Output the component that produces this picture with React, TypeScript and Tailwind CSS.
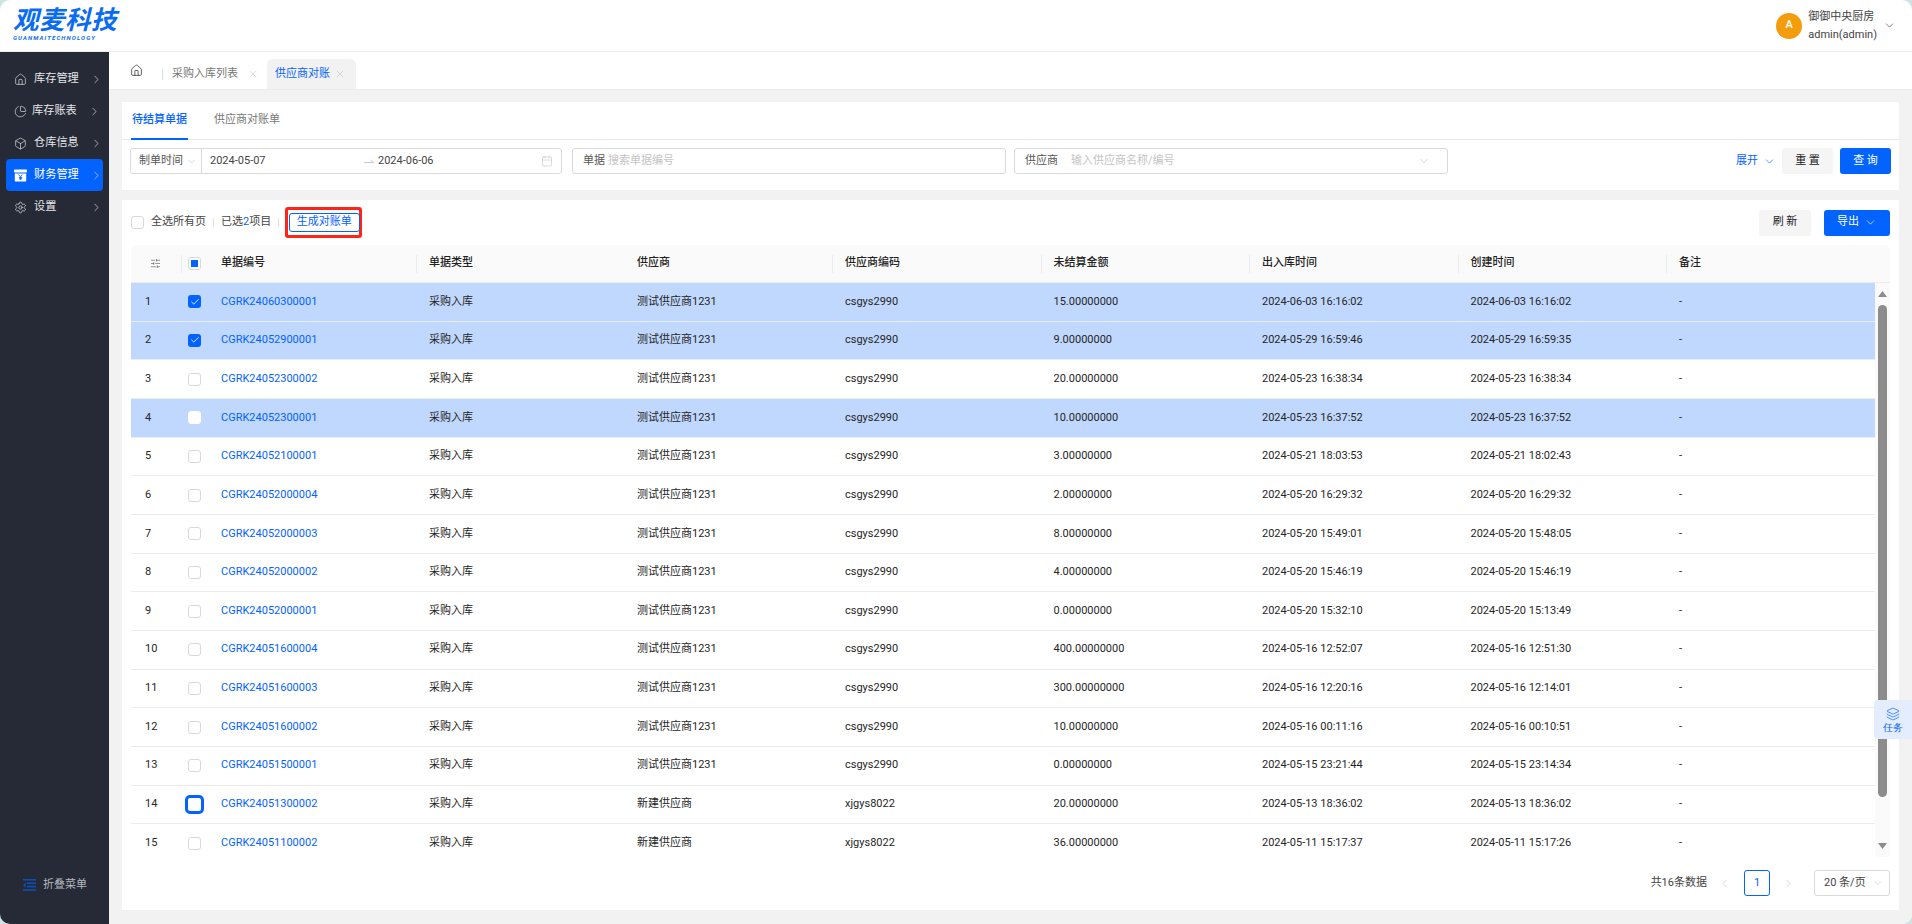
import { Home, PieChart, Box, Settings, X, ChevronRight, ChevronDown, ChevronLeft, Calendar, Layers, SlidersHorizontal, Check, House } from "lucide-react";

const F = { fontFamily: 'Roboto, "Noto Sans CJK SC", sans-serif' };
const S = "测试供应商1231";
const N = "新建供应商";
const A = "csgys2990";
const B = "xjgys8022";
const rows: [string, string, string, string, string, string][] = [
  ["CGRK24060300001", S, A, "15.00000000", "2024-06-03 16:16:02", "2024-06-03 16:16:02"],
  ["CGRK24052900001", S, A, "9.00000000", "2024-05-29 16:59:46", "2024-05-29 16:59:35"],
  ["CGRK24052300002", S, A, "20.00000000", "2024-05-23 16:38:34", "2024-05-23 16:38:34"],
  ["CGRK24052300001", S, A, "10.00000000", "2024-05-23 16:37:52", "2024-05-23 16:37:52"],
  ["CGRK24052100001", S, A, "3.00000000", "2024-05-21 18:03:53", "2024-05-21 18:02:43"],
  ["CGRK24052000004", S, A, "2.00000000", "2024-05-20 16:29:32", "2024-05-20 16:29:32"],
  ["CGRK24052000003", S, A, "8.00000000", "2024-05-20 15:49:01", "2024-05-20 15:48:05"],
  ["CGRK24052000002", S, A, "4.00000000", "2024-05-20 15:46:19", "2024-05-20 15:46:19"],
  ["CGRK24052000001", S, A, "0.00000000", "2024-05-20 15:32:10", "2024-05-20 15:13:49"],
  ["CGRK24051600004", S, A, "400.00000000", "2024-05-16 12:52:07", "2024-05-16 12:51:30"],
  ["CGRK24051600003", S, A, "300.00000000", "2024-05-16 12:20:16", "2024-05-16 12:14:01"],
  ["CGRK24051600002", S, A, "10.00000000", "2024-05-16 00:11:16", "2024-05-16 00:10:51"],
  ["CGRK24051500001", S, A, "0.00000000", "2024-05-15 23:21:44", "2024-05-15 23:14:34"],
  ["CGRK24051300002", N, B, "20.00000000", "2024-05-13 18:36:02", "2024-05-13 18:36:02"],
  ["CGRK24051100002", N, B, "36.00000000", "2024-05-11 15:17:37", "2024-05-11 15:17:26"],
];

function FinanceIcon() {
  return (
    <svg width="13" height="13" viewBox="0 0 13 13">
      <rect x="0" y="0.5" width="13" height="3" rx="0.8" fill="#fff" />
      <path d="M0.8 4.4h11.4v7a1.2 1.2 0 0 1-1.2 1.2H2a1.2 1.2 0 0 1-1.2-1.2z" fill="#fff" />
      <path d="M4.6 5.6l1.9 2.2 1.9-2.2M6.5 7.8v3M4.9 8.6h3.2M4.9 9.8h3.2" stroke="#0363ff" strokeWidth="0.9" fill="none" />
    </svg>
  );
}

function NavItem({ icon, label, active, shift }: { icon: React.ReactNode; label: string; active?: boolean; shift?: boolean }) {
  return (
    <div className={`h-8 mx-[6px] rounded-[4px] flex items-center pl-[8px] ${active ? "bg-[#0363ff] text-white" : "text-[#e4e6ea]"}`}>
      <span className="w-[13px] flex justify-center mr-[7px]">{icon}</span>
      <span className={`text-[11.2px] w-[45px] whitespace-nowrap ${shift ? "-ml-[2px]" : ""}`}>{label}</span>
      <ChevronRight size={13} strokeWidth={1.3} className="ml-[11px] text-[#d6d8dc]" />
    </div>
  );
}

function Th({ w, label, sep = true }: { w: string; label: string; sep?: boolean }) {
  return (
    <div className={`${w} h-full relative flex items-center pl-[13px] text-[11px] font-medium text-[#222]`}>
      {sep && <span className="absolute left-0 top-[10px] h-[18px] w-px bg-[#ececec]" />}
      {label}
    </div>
  );
}

function Box13({ checked, focus, white }: { checked?: boolean; focus?: boolean; white?: boolean }) {
  if (focus) return <span className="w-[19px] h-[19px] rounded-[5px] border-[3px] border-[#0363ff] bg-white" />;
  if (checked)
    return (
      <span className="w-[13px] h-[13px] rounded-[3px] bg-[#0363ff] flex items-center justify-center">
        <Check size={10} strokeWidth={2} className="text-white" />
      </span>
    );
  return <span className={`w-[13px] h-[13px] rounded-[3px] border bg-white ${white ? "border-white" : "border-[#d9d9d9]"}`} />;
}

export default function App() {
  return (
    <div className="w-[1912px] h-[924px] bg-[#cfe3e3]">
      <div style={F} className="w-full h-full rounded-[10px] overflow-hidden flex flex-col bg-white text-[#262626]">
        {/* header */}
        <header className="h-[52px] shrink-0 border-b border-[#ececec] flex items-center justify-between pl-[13px] pr-[16px]">
          <div className="flex flex-col leading-none italic text-[#0a6cf0]">
            <span className="text-[25.5px] font-bold leading-[25px] tracking-[0.5px] -mt-[2px]">观麦科技</span>
            <span className="text-[6px] font-bold tracking-[1.12px] mt-[2px] whitespace-nowrap">GUANMAITECHNOLOGY</span>
          </div>
          <div className="flex items-center">
            <span className="w-[26px] h-[26px] rounded-full bg-[#f49d0c] text-white text-[11px] font-medium flex items-center justify-center">A</span>
            <div className="ml-[6px] text-[11px] text-[#444] leading-[18px]">
              <div>御御中央厨房</div>
              <div>admin(admin)</div>
            </div>
            <ChevronDown size={13} strokeWidth={1.3} className="ml-[6px] text-[#555]" />
          </div>
        </header>

        <div className="flex-1 flex min-h-0">
          {/* sidebar */}
          <aside className="w-[109px] shrink-0 bg-[#252a36] flex flex-col pt-[11px] pb-[31px]">
            <div className="flex flex-col">
              <NavItem label="库存管理" icon={<House size={13} strokeWidth={1.2} />} />
              <NavItem label="库存账表" shift icon={<PieChart size={13} strokeWidth={1.2} />} />
              <NavItem label="仓库信息" icon={<Box size={13} strokeWidth={1.2} />} />
              <NavItem label="财务管理" active icon={<FinanceIcon />} />
              <NavItem label="设置" icon={<Settings size={13} strokeWidth={1.3} />} />
            </div>
            <div className="mt-auto flex items-center pl-[23px] text-[11px] text-[#b4b7bd]">
              <svg width="13" height="12" viewBox="0 0 13 12" className="mr-[7px]" fill="#0d4fb8">
                <rect x="0" y="0" width="13" height="1.6" />
                <rect x="4" y="3.4" width="9" height="1.6" />
                <rect x="4" y="6.8" width="9" height="1.6" />
                <rect x="0" y="10.2" width="13" height="1.6" />
                <path d="M2.6 3.4v5L0 5.9z" />
              </svg>
              折叠菜单
            </div>
          </aside>

          {/* main */}
          <main className="flex-1 min-w-0 flex flex-col bg-[#f2f2f2]">
            <nav className="h-[38px] shrink-0 bg-white border-b border-[#ececec] flex items-end text-[11px]">
              <div className="w-[54px] h-full flex items-center pl-[21px] relative">
                <Home size={13} strokeWidth={1.4} className="text-[#333]" />
                <span className="absolute right-0 top-[17px] w-px h-[11px] bg-[#ddd]" />
              </div>
              <div className="w-[104px] h-[30px] flex items-center pl-[9px] text-[#777]">
                <span className="w-[70px] whitespace-nowrap">采购入库列表</span>
                <X size={12} strokeWidth={1} className="ml-[5px] text-[#bbb]" />
              </div>
              <div className="w-[89px] h-[30px] bg-[#f2f2f2] rounded-t-[6px] flex items-center pl-[8px] text-[#0363ff]">
                <span className="w-[56px] whitespace-nowrap">供应商对账</span>
                <X size={12} strokeWidth={1} className="ml-[3px] text-[#bbb]" />
              </div>
            </nav>

            <div className="flex-1 min-h-0 pl-[13px] pr-[13px] pt-[12px] pb-[14px] flex flex-col gap-[10px]">
              {/* filter card */}
              <section className="h-[88px] shrink-0 bg-white flex flex-col">
                <div className="h-[38px] shrink-0 border-b border-[#e8e8e8] flex items-end pl-[9px] text-[11px]">
                  <div className="h-full w-[57px] flex items-center justify-center border-b-[2px] border-[#0363ff] text-[#0363ff] font-medium -mb-px">待结算单据</div>
                  <div className="h-full flex items-center ml-[26px] text-[#777]">供应商对账单</div>
                </div>
                <div className="flex items-center h-[26px] mt-[8px] pl-[8px] pr-[8px] text-[11px]">
                  <div className="w-[432px] h-full border border-[#d9d9d9] rounded-[3px] flex items-center">
                    <div className="w-[71px] h-full border-r border-[#d9d9d9] flex items-center pl-[8px] text-[#555]">
                      <span className="whitespace-nowrap">制单时间</span>
                      <ChevronDown size={11} strokeWidth={1} className="ml-[3px] text-[#aaa]" />
                    </div>
                    <span className="ml-[8px] w-[154px] text-[#444]">2024-05-07</span>
                    <svg width="10" height="6" viewBox="0 0 10 6" className="text-[#bbb]" fill="none" stroke="currentColor" strokeWidth="0.8">
                      <path d="M0 4.5h9.5L6.5 2" />
                    </svg>
                    <span className="ml-[4px] text-[#444]">2024-06-06</span>
                    <Calendar size={12} strokeWidth={1} className="ml-auto mr-[8px] text-[#bbb]" />
                  </div>
                  <div className="ml-[10px] w-[434px] h-full border border-[#d9d9d9] rounded-[3px] flex items-center pl-[10px]">
                    <span className="text-[#555]">单据</span>
                    <span className="ml-[3px] text-[#c4c4c4]">搜索单据编号</span>
                  </div>
                  <div className="ml-[8px] w-[434px] h-full border border-[#d9d9d9] rounded-[3px] flex items-center pl-[10px]">
                    <span className="text-[#555]">供应商</span>
                    <span className="ml-[13px] text-[#c4c4c4]">输入供应商名称/编号</span>
                    <ChevronDown size={12} strokeWidth={1} className="ml-auto mr-[17px] text-[#aaa]" />
                  </div>
                  <span className="ml-auto flex items-center text-[#0363ff]">
                    展开
                    <ChevronDown size={13} strokeWidth={1.2} className="ml-[5px]" />
                  </span>
                  <button className="ml-[6px] w-[51px] h-full rounded-[3px] bg-[#f5f5f5] text-[#222]">重 置</button>
                  <button className="ml-[7px] w-[51px] h-full rounded-[3px] bg-[#0363ff] text-white">查 询</button>
                </div>
              </section>

              {/* table card */}
              <section className="flex-1 min-h-0 bg-white flex flex-col relative">
                <div className="h-[45px] shrink-0 flex items-center pl-[9px] pr-[9px] text-[11px]">
                  <span className="w-[13px] h-[13px] rounded-[3px] border border-[#d9d9d9]" />
                  <span className="ml-[7px] text-[#444]">全选所有页</span>
                  <span className="ml-[7px] w-px h-[9px] bg-[#e0e0e0]" />
                  <span className="ml-[7px] text-[#444]">已选<span className="text-[#0363ff]">2</span>项目</span>
                  <span className="ml-[7px] w-px h-[9px] bg-[#e0e0e0]" />
                  <span className="ml-[6px] w-[77px] h-[31px] border-[3px] border-[#ff2418] rounded-[3px] flex items-center justify-center">
                    <span className="w-[71px] h-[19px] -mr-[1px] border border-[#0363ff] rounded-[3px] text-[#0363ff] flex items-center justify-center">生成对账单</span>
                  </span>
                  <button className="ml-auto w-[52px] h-[26px] rounded-[3px] bg-[#f5f5f5] text-[#222]">刷 新</button>
                  <button className="ml-[13px] w-[66px] h-[26px] rounded-[3px] bg-[#0363ff] text-white flex items-center justify-center">
                    导出
                    <ChevronDown size={13} strokeWidth={1.2} className="ml-[5px]" />
                  </button>
                </div>

                <div className="mx-[9px] flex-1 min-h-0 flex flex-col">
                  <div className="h-[38px] shrink-0 bg-[#fafafa] rounded-t-[6px] border-b border-[#ececec] flex items-center">
                    <div className="w-[50px] flex justify-center pr-[2px]">
                      <SlidersHorizontal size={11} strokeWidth={1.2} className="text-[#444]" />
                    </div>
                    <div className="w-[27px] h-full relative flex items-center justify-center">
                      <span className="absolute left-0 top-[10px] h-[18px] w-px bg-[#ececec]" />
                      <span className="w-[13px] h-[13px] rounded-[3px] border border-[#d9d9d9] bg-white flex items-center justify-center">
                        <span className="w-[7px] h-[7px] bg-[#0363ff]" />
                      </span>
                    </div>
                    <Th w="w-[208px]" label="单据编号" sep={false} />
                    <Th w="w-[208px]" label="单据类型" />
                    <Th w="w-[208px]" label="供应商" sep={false} />
                    <Th w="w-[208.5px]" label="供应商编码" />
                    <Th w="w-[208.5px]" label="未结算金额" />
                    <Th w="w-[208.5px]" label="出入库时间" />
                    <Th w="w-[208.5px]" label="创建时间" />
                    <Th w="flex-1" label="备注" />
                  </div>
                  <div className="h-[574px] shrink-0 flex overflow-hidden">
                    <div className="w-[1744px] shrink-0">
                      {rows.map((r, i) => {
                        const sel = i < 2 || i === 3;
                        return (
                          <div key={r[0]} className={`h-[38.67px] flex items-center text-[11px] border-b ${sel ? "bg-[#c0d8fd] border-[#e6eefb]" : "bg-white border-[#ececec]"}`}>
                            <div className="w-[50px] pl-[14px]">{i + 1}</div>
                            <div className="w-[27px] flex justify-center">
                              <Box13 checked={i < 2} white={i === 3} focus={i === 13} />
                            </div>
                            <div className="w-[208px] pl-[13px] text-[#0363ff]">{r[0]}</div>
                            <div className="w-[208px] pl-[13px]">采购入库</div>
                            <div className="w-[208px] pl-[13px]">{r[1]}</div>
                            <div className="w-[208.5px] pl-[13px]">{r[2]}</div>
                            <div className="w-[208.5px] pl-[13px]">{r[3]}</div>
                            <div className="w-[208.5px] pl-[13px]">{r[4]}</div>
                            <div className="w-[208.5px] pl-[13px]">{r[5]}</div>
                            <div className="flex-1 pl-[13px]">-</div>
                          </div>
                        );
                      })}
                    </div>
                    <div className="flex-1 bg-[#fafafa] flex flex-col items-center">
                      <svg width="9" height="6" viewBox="0 0 9 6" className="mt-[8px]" fill="#8c8c8c"><path d="M4.5 0L9 6H0z" /></svg>
                      <div className="w-[9px] h-[492px] mt-[8px] rounded-full bg-[#8c8c8c]" />
                      <svg width="9" height="6" viewBox="0 0 9 6" className="mt-auto mb-[8px]" fill="#8c8c8c"><path d="M4.5 6L9 0H0z" /></svg>
                    </div>
                  </div>
                  <div className="flex-1 flex items-center justify-end text-[11px] pb-[1px]">
                    <span className="text-[#444]">共16条数据</span>
                    <ChevronLeft size={13} strokeWidth={1} className="ml-[11px] text-[#bbb]" />
                    <span className="ml-[13px] w-[26px] h-[26px] rounded-[3px] border border-[#0363ff] text-[#0363ff] flex items-center justify-center">1</span>
                    <ChevronRight size={13} strokeWidth={1} className="ml-[12px] text-[#bbb]" />
                    <span className="ml-[19px] w-[76px] h-[26px] rounded-[3px] border border-[#d9d9d9] flex items-center pl-[9px] text-[#444]">
                      20 条/页
                      <ChevronDown size={12} strokeWidth={1} className="ml-[6px] text-[#bbb]" />
                    </span>
                  </div>
                </div>
              </section>
            </div>
          </main>
        </div>
      </div>
      <div className="absolute left-[1874px] top-[700px] w-[38px] h-[39px] rounded-l-[4px] bg-[#e3edfd] text-[#0363ff] flex flex-col items-center justify-center text-[10px] leading-[12px]">
        <Layers size={14} strokeWidth={1.2} />
        任务
      </div>
    </div>
  );
}
